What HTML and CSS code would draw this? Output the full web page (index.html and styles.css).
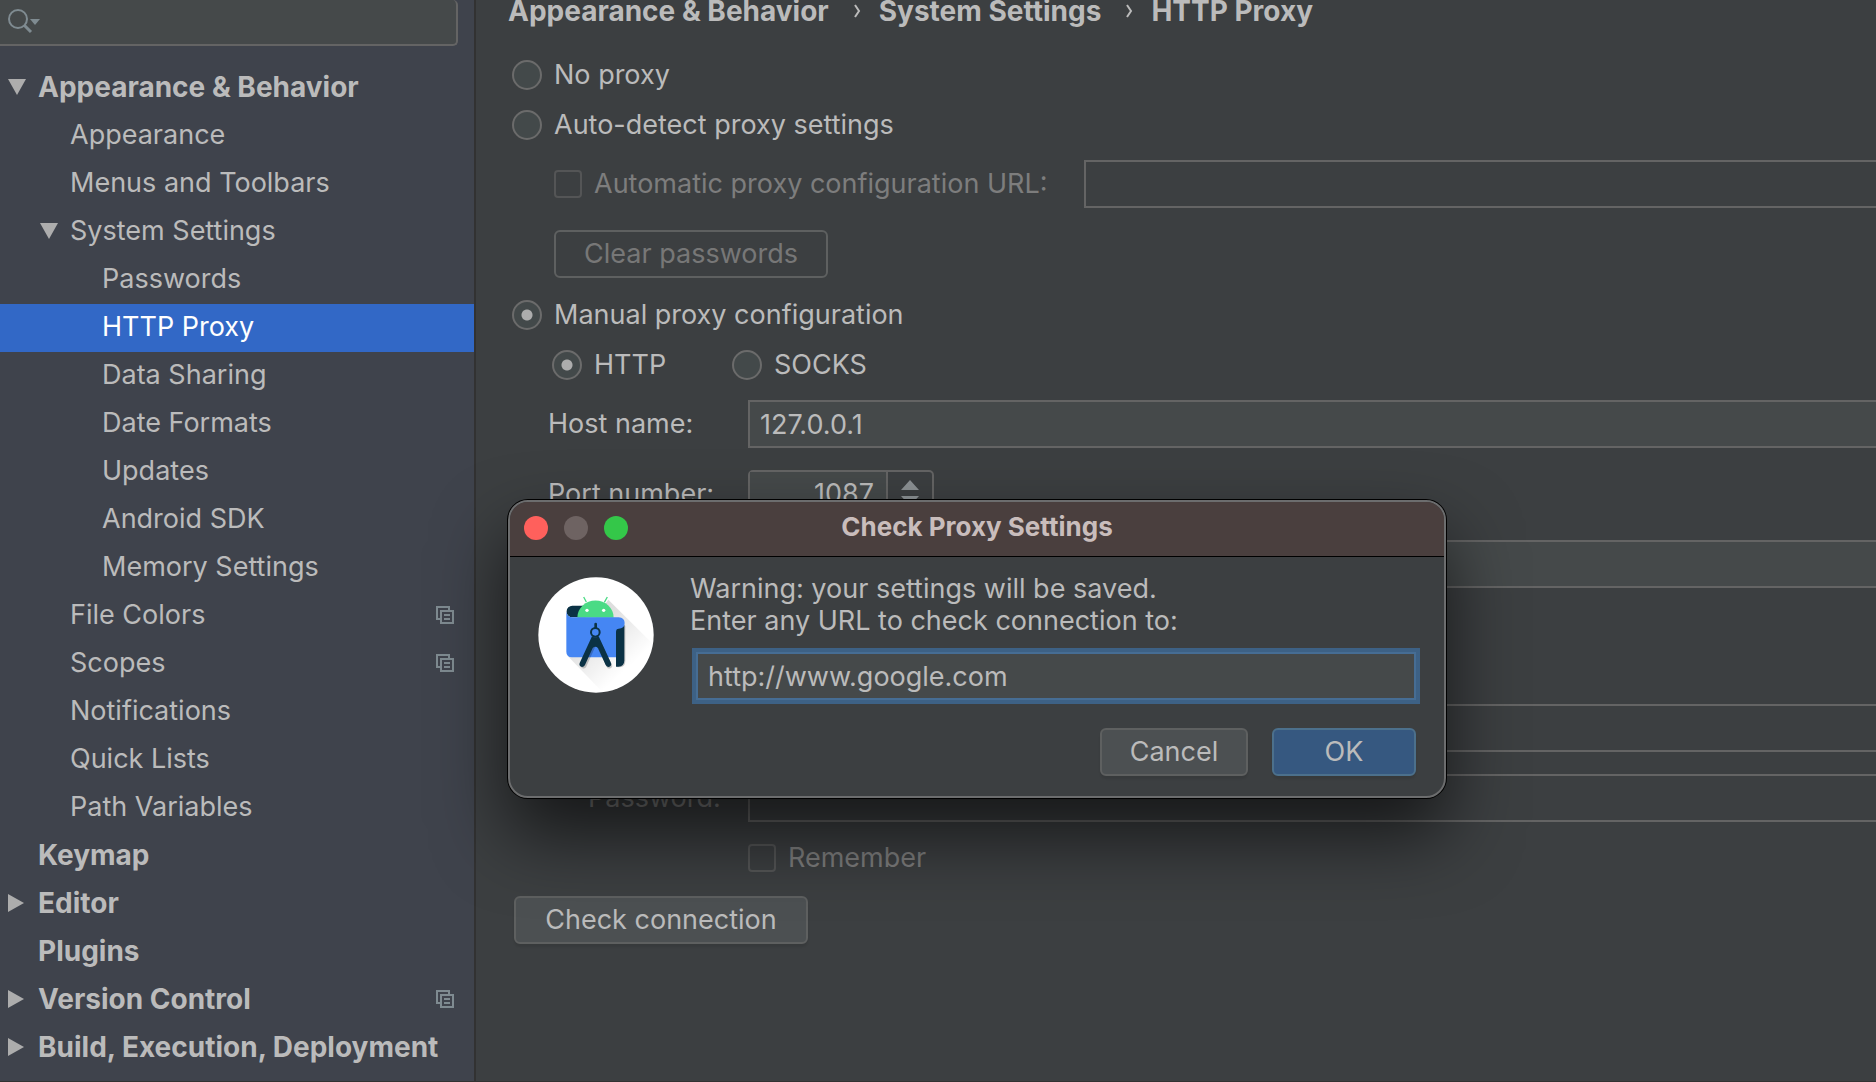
FILE: index.html
```
<!DOCTYPE html>
<html lang="en">
<head>
<meta charset="utf-8">
<title>HTTP Proxy</title>
<link rel="stylesheet" href="styles.css">
</head>
<body>
<svg class="defs" width="0" height="0" aria-hidden="true">
  <symbol id="open" viewBox="0 0 18 18"><path d="M0 1h18L9 17z" fill="#adadad"/></symbol>
  <symbol id="closed" viewBox="0 0 18 18"><path d="M0 0v18l16-9z" fill="#adadad"/></symbol>
  <symbol id="project" viewBox="0 0 18 18"><path d="M4 13H1V1h12v3M5 5h12v12H5zM8 9h6M8 13h6" fill="none" stroke="#7f8b91" stroke-width="2"/></symbol>
  <symbol id="crumb" viewBox="0 0 7 14"><path d="M1 1l4 6-4 6" fill="none" stroke="#bbb" stroke-width="2"/></symbol>
</svg>
<div class="app">
  <aside class="sidebar">
    <div class="search">
      <svg width="34" height="26" viewBox="0 0 34 26" aria-hidden="true"><circle cx="10" cy="10" r="9" fill="none" stroke="#7f8b91" stroke-width="2"/><path d="M16 16l7 7" stroke="#7f8b91" stroke-width="3"/><path d="M22 10h10l-5 6z" fill="#7f8b91"/></svg>
      <input type="search" aria-label="Search settings">
    </div>
    <nav>
      <ul class="tree">
        <li><a href="#" class="row top"><svg class="arrow"><use href="#open"/></svg>Appearance &amp; Behavior</a></li>
        <li><a href="#" class="row sub">Appearance</a></li>
        <li><a href="#" class="row sub">Menus and Toolbars</a></li>
        <li><a href="#" class="row sub"><svg class="arrow"><use href="#open"/></svg>System Settings</a></li>
        <li><a href="#" class="row leaf">Passwords</a></li>
        <li><a href="#" class="row leaf selected" aria-current="page">HTTP Proxy</a></li>
        <li><a href="#" class="row leaf">Data Sharing</a></li>
        <li><a href="#" class="row leaf">Date Formats</a></li>
        <li><a href="#" class="row leaf">Updates</a></li>
        <li><a href="#" class="row leaf">Android SDK</a></li>
        <li><a href="#" class="row leaf">Memory Settings</a></li>
        <li><a href="#" class="row sub">File Colors<svg class="project"><use href="#project"/></svg></a></li>
        <li><a href="#" class="row sub">Scopes<svg class="project"><use href="#project"/></svg></a></li>
        <li><a href="#" class="row sub">Notifications</a></li>
        <li><a href="#" class="row sub">Quick Lists</a></li>
        <li><a href="#" class="row sub">Path Variables</a></li>
        <li><a href="#" class="row top">Keymap</a></li>
        <li><a href="#" class="row top"><svg class="arrow"><use href="#closed"/></svg>Editor</a></li>
        <li><a href="#" class="row top">Plugins</a></li>
        <li><a href="#" class="row top"><svg class="arrow"><use href="#closed"/></svg>Version Control<svg class="project"><use href="#project"/></svg></a></li>
        <li><a href="#" class="row top"><svg class="arrow"><use href="#closed"/></svg>Build, Execution, Deployment</a></li>
      </ul>
    </nav>
  </aside>

  <main class="content">
    <h1 class="crumbs"><span>Appearance &amp; Behavior</span><svg><use href="#crumb"/></svg><span>System Settings</span><svg><use href="#crumb"/></svg><span>HTTP Proxy</span></h1>

    <form class="form">
      <label class="choice"><input type="radio" name="mode">No proxy</label>
      <label class="choice"><input type="radio" name="mode">Auto-detect proxy settings</label>
      <div class="auto">
        <div class="auto-url">
          <label class="choice off"><input type="checkbox" disabled>Automatic proxy configuration URL:</label>
          <input class="field" type="text" aria-label="Configuration URL" disabled>
        </div>
        <button class="button clear" type="button" disabled>Clear passwords</button>
      </div>
      <label class="choice"><input type="radio" name="mode" checked>Manual proxy configuration</label>
      <div class="protocols">
        <label class="choice"><input type="radio" name="protocol" checked>HTTP</label>
        <label class="choice"><input type="radio" name="protocol">SOCKS</label>
      </div>
      <div class="grid">
        <label for="host">Host name:</label>
        <input class="field" id="host" type="text" value="127.0.0.1">
        <label for="port">Port number:</label>
        <div class="spinner">
          <input id="port" type="text" value="1087">
          <button type="button" aria-label="Change port"><svg width="18" height="28" viewBox="0 0 18 28"><path d="M0 10L9 0l9 10zM0 16h18l-9 10z" fill="#8c9194"/></svg></button>
        </div>
        <input class="field value" type="text" aria-label="Hosts without proxy">
        <input class="field value login" type="text" aria-label="Login" disabled>
        <label class="off indent" for="password">Password:</label>
        <input class="field" id="password" type="password" disabled>
        <label class="choice off value"><input type="checkbox" disabled>Remember</label>
      </div>
      <button class="button check" type="button">Check connection</button>
    </form>

    <dialog class="dialog" open aria-labelledby="dialog-title">
      <header class="titlebar">
        <div class="lights"><button class="close" aria-label="Close"></button><button class="minimize" aria-label="Minimize" disabled></button><button class="zoom" aria-label="Zoom"></button></div>
        <h2 id="dialog-title">Check Proxy Settings</h2>
      </header>
      <div class="dialog-body">
        <svg class="logo" viewBox="114 262 348 348" aria-hidden="true">
          <defs><linearGradient id="fade" gradientUnits="userSpaceOnUse" x1="290" y1="400" x2="400" y2="520"><stop offset="0" stop-color="#000" stop-opacity=".13"/><stop offset="1" stop-color="#000" stop-opacity="0"/></linearGradient></defs>
          <circle cx="288" cy="436" r="173" fill="#fff"/>
          <path d="M325 330L458 462A173 173 0 0 1 304 604L204 500z" fill="url(#fade)"/>
          <path d="M251 322l8 15M322 322l-9 16" stroke="#4adb85" stroke-width="4"/>
          <rect x="200" y="348" width="70" height="35" rx="17" fill="#0b3245"/>
          <path d="M232 384A54 51 0 0 1 341 384z" fill="#4adb85"/>
          <circle cx="261" cy="362" r="5" fill="#fff"/><circle cx="311" cy="362" r="5" fill="#fff"/>
          <path d="M352 408h24v106q0 19-19 19h-5z" fill="#000" opacity=".2"/>
          <path d="M348 405h25v107q0 19-18 19h-7z" fill="#0b3245"/>
          <path d="M199 365q2 18 19 18h138q18 1 18 18-1 16-18 16-8 0-8 10v76H216q-17-1-17-17z" fill="#4586f3"/>
          <path d="M288 446l-37 82M288 446l40 82" stroke="#000" stroke-opacity=".2" stroke-width="17" stroke-linecap="round"/>
          <path d="M287 403v14" stroke="#0b3245" stroke-width="8" stroke-linecap="round"/>
          <circle cx="286" cy="428" r="13" fill="#4586f3" stroke="#0b3245" stroke-width="6"/>
          <path d="M276 440q10 7 20 0l36 78c7 13-9 19-15 8l-23-51q-8-7-16 0l-23 51c-6 11-22 5-15-8z" fill="#0b3245"/>
        </svg>
        <div class="prompt">
          <p>Warning: your settings will be saved.</p>
          <label for="url">Enter any URL to check connection to:</label>
          <input id="url" type="text" value="http://www.google.com">
          <div class="actions"><button class="button cancel" type="button">Cancel</button><button class="button ok" type="button">OK</button></div>
        </div>
      </div>
    </dialog>
  </main>
</div>
</body>
</html>
```
FILE: styles.css
```
* { box-sizing: border-box; }

body {
  margin: 0;
  background: #3c3f41;
  color: #bbb;
  font: 27px/32px Inter, "Liberation Sans", sans-serif;
}

input, button { font: inherit; color: inherit; margin: 0; }
.defs { position: absolute; }

.app {
  display: grid;
  grid-template-columns: 476px 1fr;
  min-height: 100vh;
  border-bottom: 1px solid #323232;
  overflow: hidden;
}

/* Settings tree */
.sidebar { background: #3f434c; border-right: 2px solid #323232; }

.search {
  display: flex;
  align-items: center;
  height: 46px;
  margin-right: 16px;
  padding: 0 8px;
  background: #45494a;
  border: solid #646464;
  border-width: 0 2px 2px 0;
  border-radius: 0 5px 5px 0;
}
.search input { flex: 1; min-width: 0; background: none; border: 0; outline: 0; }

.tree { list-style: none; margin: 18px 0 0; padding: 0; }
.row {
  display: flex;
  align-items: center;
  height: 48px;
  padding-right: 20px;
  padding-bottom: 2px;
  color: inherit;
  text-decoration: none;
  white-space: nowrap;
}
.top { padding-left: 38px; font-size: 28px; font-weight: 700; }
.sub { padding-left: 70px; }
.leaf { padding-left: 102px; }
.selected { background: #3268c6; color: #fff; }
.arrow { width: 18px; height: 18px; margin: 0 12px 0 -30px; }
.project { width: 18px; height: 18px; margin-left: auto; }

/* Proxy page */
.content { position: relative; min-width: 0; }

.crumbs {
  display: flex;
  align-items: center;
  height: 22px;
  margin: 0;
  padding-left: 32px;
  font-size: 28px;
  line-height: 22px;
  white-space: nowrap;
}
.crumbs svg { width: 7px; height: 14px; margin: 0 18px 0 25px; }

.form { padding: 38px 0 0 36px; }

.choice { display: flex; align-items: center; gap: 12px; height: 30px; margin-bottom: 20px; white-space: nowrap; }
.choice input {
  appearance: none;
  flex: none;
  width: 30px;
  height: 30px;
  border: 2px solid #6b6b6b;
  border-radius: 50%;
  background: #43494a;
}
.choice input:checked { background: radial-gradient(circle, #adadad 5px, #43494a 6px); }
.choice input[type="checkbox"] { width: 28px; height: 28px; border-color: #545556; border-radius: 4px; background: none; }
.off { color: #7d7d7d; }

.auto { padding-left: 42px; margin-bottom: 22px; }
.auto-url { display: flex; align-items: center; gap: 28px; margin-bottom: 22px; }
.auto-url .choice { min-width: 502px; margin: 0; }
.auto-url .field { flex: 1; min-width: 0; }

.field {
  width: 100%;
  height: 48px;
  padding: 0 10px;
  background: #45494a;
  border: 2px solid #646464;
  border-right: 0;
  border-radius: 0;
  outline: 0;
}
.field:disabled { background: none; }

.button {
  display: block;
  height: 48px;
  padding: 0 16px;
  background: #4c5052;
  border: 2px solid #5e6060;
  border-radius: 6px;
  box-shadow: 0 3px 2px rgba(0, 0, 0, .08);
}
.button:disabled { background: none; color: #777; box-shadow: none; }
.clear { min-width: 274px; }

.protocols { display: grid; grid-template-columns: 180px auto; justify-content: start; padding-left: 40px; }

.grid {
  display: grid;
  grid-template-columns: 200px 1fr;
  row-gap: 22px;
  align-items: center;
  padding-left: 36px;
}
.value { grid-column: 2; }
.login { margin-top: 94px; }
.indent { padding-left: 40px; }
.grid .choice { height: 28px; margin: 0; }

.spinner { display: flex; width: 186px; height: 48px; border: 2px solid #646464; border-radius: 5px; }
.spinner input { flex: 1; min-width: 0; padding: 0 12px; background: #45494a; border: 0; outline: 0; text-align: right; }
.spinner button { width: 46px; padding: 0; background: none; border: 0; border-left: 2px solid #646464; }
.spinner svg { display: block; margin: 0 auto; }

.check { min-width: 294px; margin: 24px 0 0 2px; }

/* Connection check window */
.dialog {
  position: absolute;
  left: 32px;
  top: 500px;
  width: 938px;
  margin: 0;
  padding: 0;
  overflow: hidden;
  color: inherit;
  background: #3c3f41;
  border: 2px solid #6c6d6e;
  border-radius: 20px;
  box-shadow: 0 0 0 1px #000, 0 36px 72px rgba(0, 0, 0, .64);
}

.titlebar {
  display: grid;
  grid-template-columns: 1fr auto 1fr;
  align-items: center;
  height: 55px;
  padding: 0 14px 2px;
  background: #4a3f3e;
  border-bottom: 1px solid #000;
}
.titlebar h2 { margin: 0; padding-bottom: 2px; font-size: 26px; color: #c9bdbc; }
.lights { display: flex; gap: 16px; }
.lights button { width: 24px; height: 24px; padding: 0; border: 0; border-radius: 50%; }
.close { background: #ff605c; }
.minimize { background: #6e6362; }
.zoom { background: #34c749; }

.dialog-body { display: flex; gap: 36px; padding: 16px 24px 20px 28px; }
.logo { flex: none; width: 116px; height: 116px; margin-top: 4px; }
.prompt { flex: 1; min-width: 0; }
.prompt p { margin: 0; }
.prompt label { display: block; }
.prompt input {
  display: block;
  width: calc(100% - 10px);
  height: 48px;
  margin: 15px 4px 28px 6px;
  padding: 0 10px;
  background: #45494a;
  border: 2px solid #466d94;
  outline: 4px solid #3d6185;
  border-radius: 0;
}
.actions { display: flex; justify-content: flex-end; gap: 24px; padding-right: 4px; }
.cancel { min-width: 148px; }
.ok { min-width: 144px; background: #365880; border-color: #4c708c; }
```
